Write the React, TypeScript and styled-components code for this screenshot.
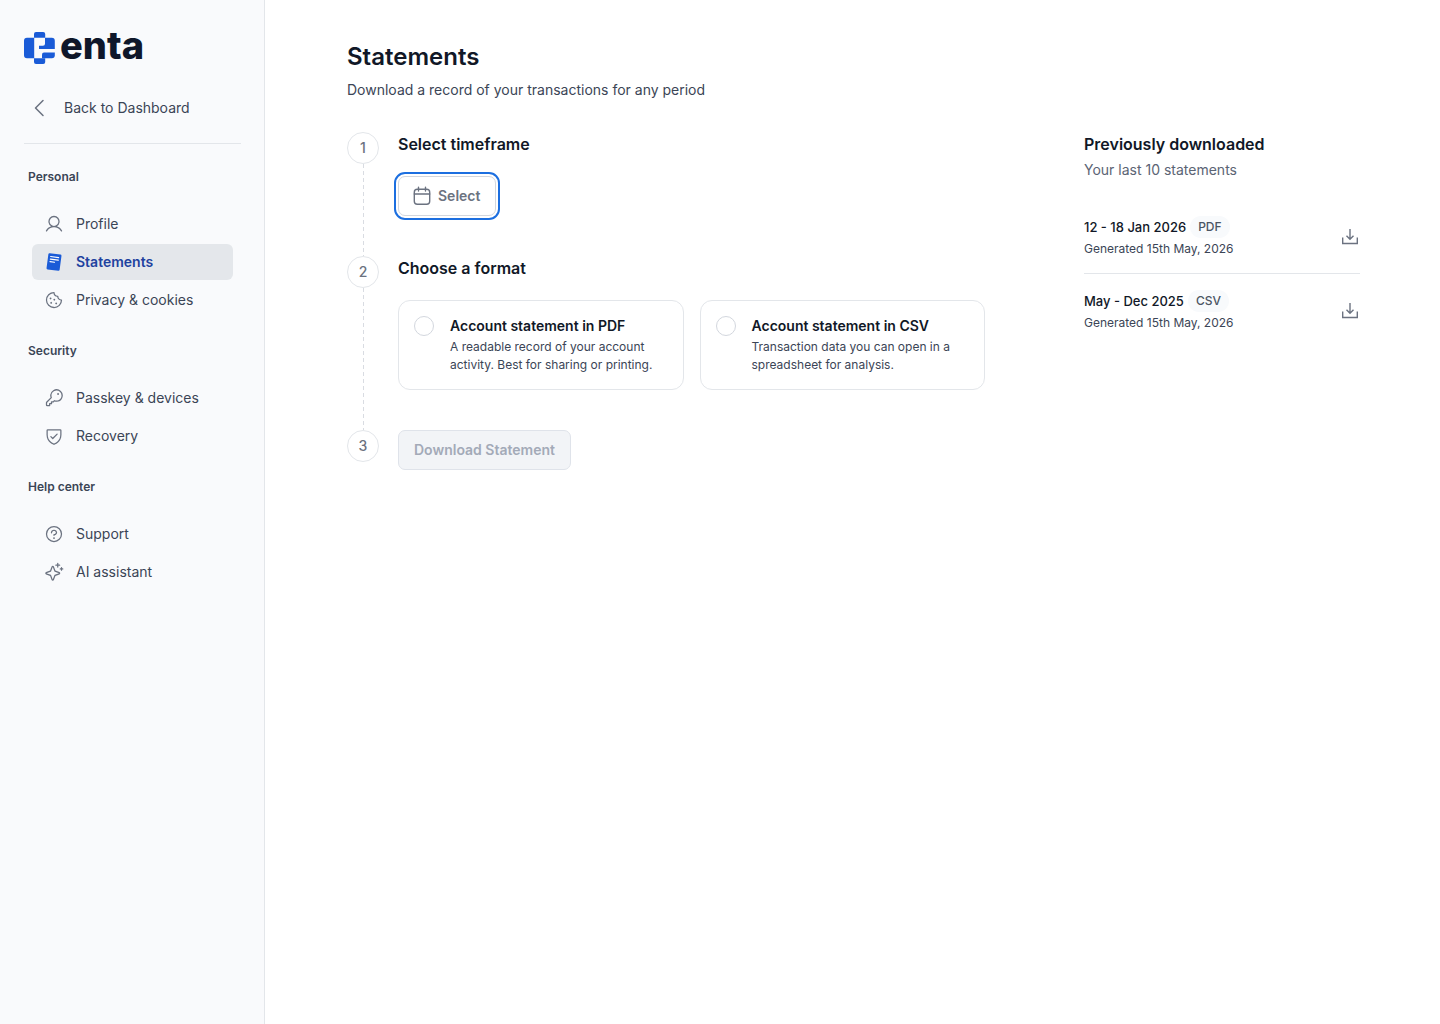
import React from "react";
import styled, { createGlobalStyle } from "styled-components";
import {
  PiCaretLeft,
  PiUser,
  PiCookie,
  PiKey,
  PiShieldCheck,
  PiQuestion,
  PiSparkle,
} from "react-icons/pi";

const color = {
  ink: "#111827",
  text: "#3b4556",
  muted: "#6b7280",
  faint: "#a3aab8",
  line: "#e3e6ea",
  lineStrong: "#d3d7de",
  panel: "#f9fafc",
  blue: "#1a5bd7",
  blueText: "#1e429f",
};

const GlobalStyle = createGlobalStyle`
  *, *::before, *::after { box-sizing: border-box; }
  body {
    margin: 0;
    background: #fff;
    color: ${color.text};
    font-family: Inter, "Liberation Sans", sans-serif;
    font-size: 14px;
    line-height: 20px;
  }
  h1, h2, h3, p, ul, ol { margin: 0; padding: 0; }
  ul, ol { list-style: none; }
  button, input { font: inherit; }
`;

const Page = styled.div`
  display: flex;
  min-height: 100vh;
`;

const Sidebar = styled.aside`
  flex: 0 0 265px;
  display: flex;
  flex-direction: column;
  padding: 32px 23px 32px 24px;
  background: ${color.panel};
  border-right: 1px solid ${color.line};
`;

const Brand = styled.a`
  display: flex;
  align-items: flex-start;
  gap: 4px;
  height: 32px;
  color: #0f172a;
  font-size: 38px;
  font-weight: 800;
  line-height: 26px;
  text-decoration: none;
`;

const BackLink = styled.a`
  display: flex;
  align-items: center;
  gap: 12px;
  margin: 32px 0 23px;
  padding-left: 4px;
  color: ${color.text};
  text-decoration: none;
  svg { color: ${color.muted}; }
`;

const NavSection = styled.section`
  display: flex;
  flex-direction: column;
  gap: 20px;
  & + & { margin-top: 24px; }
`;

const NavSections = styled.nav`
  padding-top: 24px;
  border-top: 1px solid ${color.line};
`;

const NavHeading = styled.h2`
  padding-left: 4px;
  font-size: 12px;
  font-weight: 600;
  line-height: 18px;
`;

const NavList = styled.ul`
  display: flex;
  flex-direction: column;
  gap: 2px;
  padding: 0 8px;
`;

const NavLink = styled.a<{ $active?: boolean }>`
  display: flex;
  align-items: center;
  gap: 12px;
  height: 36px;
  padding: 0 12px;
  border-radius: 6px;
  background: ${(p) => (p.$active ? "#e4e7eb" : "transparent")};
  color: ${(p) => (p.$active ? color.blueText : color.text)};
  font-weight: ${(p) => (p.$active ? 600 : 400)};
  text-decoration: none;
  svg { color: ${(p) => (p.$active ? color.blue : color.muted)}; }
`;

const Main = styled.main`
  flex: 1;
  min-width: 0;
  padding: 40px 80px 40px 82px;
`;

const PageTitle = styled.h1`
  color: ${color.ink};
  font-size: 24px;
  font-weight: 600;
  line-height: 34px;
`;

const Lead = styled.p`
  margin-top: 6px;
`;

const Columns = styled.div`
  display: grid;
  grid-template-columns: minmax(0, 1fr) 276px;
  gap: 99px;
  margin-top: 32px;
`;

const Step = styled.li`
  display: flex;
  gap: 19px;
`;

const StepRail = styled.div`
  display: flex;
  flex-direction: column;
  align-items: center;
  flex: 0 0 32px;
`;

const StepNumber = styled.span`
  display: grid;
  place-items: center;
  width: 32px;
  height: 32px;
  border: 1px solid ${color.line};
  border-radius: 50%;
  color: ${color.muted};
  font-weight: 500;
`;

const StepLine = styled.span`
  flex: 1;
  width: 1px;
  background: repeating-linear-gradient(
    to bottom,
    #d9dce2 0 4px,
    transparent 4px 7px
  );
`;

const StepBody = styled.div<{ $last?: boolean }>`
  flex: 1;
  min-width: 0;
  padding-bottom: ${(p) => (p.$last ? 0 : 40)}px;
`;

const Heading = styled.h2`
  color: ${color.ink};
  font-size: 16px;
  font-weight: 600;
  line-height: 24px;
`;

const StepContent = styled.div`
  margin-top: 20px;
`;

const Button = styled.button<{ $withIcon?: boolean }>`
  display: inline-flex;
  align-items: center;
  gap: 6px;
  height: 40px;
  padding: 0 15px 0 ${(p) => (p.$withIcon ? 13 : 15)}px;
  border: 1px solid ${color.lineStrong};
  border-radius: 7px;
  background: #fff;
  color: ${color.muted};
  font-weight: 600;
  vertical-align: top;
  &:focus { outline: 2px solid #1c6fe0; outline-offset: 2px; }
  &:disabled {
    border-color: #dfe3ea;
    background: #f2f4f7;
    color: ${color.faint};
  }
`;

const Formats = styled.div`
  display: grid;
  grid-template-columns: 1fr 1fr;
  gap: 16px;
`;

const FormatCard = styled.label`
  display: flex;
  gap: 16px;
  padding: 15px;
  border: 1px solid ${color.line};
  border-radius: 12px;
`;

const Radio = styled.input`
  appearance: none;
  flex: 0 0 20px;
  height: 20px;
  margin: 0;
  border: 1px solid ${color.lineStrong};
  border-radius: 50%;
  background: #fff;
  &:checked { border: 6px solid ${color.blue}; }
`;

const FormatText = styled.span`
  display: flex;
  flex-direction: column;
  gap: 2px;
  font-size: 12px;
  line-height: 18px;
`;

const FormatName = styled.span`
  color: ${color.ink};
  font-size: 14px;
  font-weight: 600;
  line-height: 20px;
`;

const HistoryLead = styled.p`
  margin-top: 4px;
  color: #5b6474;
`;

const HistoryList = styled.ul`
  margin-top: 20px;
`;

const HistoryItem = styled.li`
  display: flex;
  align-items: center;
  justify-content: space-between;
  padding: 16px 0 15px;
  & + & { border-top: 1px solid ${color.line}; }
`;

const HistoryTitle = styled.h3`
  display: flex;
  align-items: center;
  gap: 4px;
  color: ${color.ink};
  font-size: 13px;
  font-weight: 500;
  line-height: 22px;
`;

const Tag = styled.span`
  padding: 0 8px;
  border-radius: 11px;
  background: #f8fafc;
  color: #4b5563;
  font-size: 12px;
`;

const HistoryDate = styled.p`
  margin-top: 2px;
  font-size: 12px;
  line-height: 18px;
`;

const IconButton = styled.button`
  display: grid;
  padding: 0;
  border: 0;
  background: none;
  color: ${color.muted};
`;

const LogoMark = () => (
  <svg width="32" height="32" viewBox="0 0 32 32" aria-hidden="true">
    <g fill={color.blue}>
      <path d="M10 5.800V2a2 2 0 0 1 2-2h7.200a2 2 0 0 1 2 2v3.800z" />
      <path d="M10 26.200V30a2 2 0 0 0 2 2h7.200a2 2 0 0 0 2-2v-3.800z" />
      <path d="M3 5.800h7.200v20.400H3a3 3 0 0 1-3-3V8.800a3 3 0 0 1 3-3z" />
      <path d="M21 5.800h6.800a3 3 0 0 1 3 3V17H15v-3.200h4a2 2 0 0 0 2-2z" />
      <path d="M18 22.500a2 2 0 0 1 2-2h10.800v2.700a3 3 0 0 1-3 3H18z" />
    </g>
  </svg>
);

const StatementIcon = () => (
  <svg width="20" height="20" viewBox="0 0 20 20" aria-hidden="true">
    <g transform="rotate(7.500 10 10)">
      <rect x="3.400" y="1.800" width="13.200" height="16.400" rx="1.200" fill="currentColor" />
      <path
        d="M6 5h8M6 7.600h8M6 10.200h4.500"
        stroke="#fff"
        strokeWidth="1.200"
        strokeLinecap="round"
      />
    </g>
  </svg>
);

const CalendarIcon = () => (
  <svg
    width="20"
    height="20"
    viewBox="0 0 20 20"
    fill="none"
    stroke="currentColor"
    strokeWidth="1.400"
    strokeLinecap="round"
    aria-hidden="true"
  >
    <rect x="2.300" y="3.200" width="15.400" height="15" rx="3" />
    <path d="M2.300 8h15.400M6.500 1.300v3.700M13.500 1.300v3.700" />
  </svg>
);

const DownloadIcon = () => (
  <svg
    width="20"
    height="20"
    viewBox="0 0 20 20"
    fill="none"
    stroke="currentColor"
    strokeWidth="1.400"
    aria-hidden="true"
  >
    <path d="M2.700 10.500v6h14.600v-6M10 2v10M6.500 8.700l3.500 3.500 3.500-3.500" />
  </svg>
);

type NavItem = { label: string; icon: React.ReactNode; active?: boolean };

const sections: { title: string; items: NavItem[] }[] = [
  {
    title: "Personal",
    items: [
      { label: "Profile", icon: <PiUser size={20} /> },
      { label: "Statements", icon: <StatementIcon />, active: true },
      { label: "Privacy & cookies", icon: <PiCookie size={20} /> },
    ],
  },
  {
    title: "Security",
    items: [
      { label: "Passkey & devices", icon: <PiKey size={20} /> },
      { label: "Recovery", icon: <PiShieldCheck size={20} /> },
    ],
  },
  {
    title: "Help center",
    items: [
      { label: "Support", icon: <PiQuestion size={20} /> },
      { label: "AI assistant", icon: <PiSparkle size={20} /> },
    ],
  },
];

const formats = [
  {
    id: "pdf",
    name: "Account statement in PDF",
    text: "A readable record of your account activity. Best for sharing or printing.",
  },
  {
    id: "csv",
    name: "Account statement in CSV",
    text: "Transaction data you can open in a spreadsheet for analysis.",
  },
];

const history = [
  { range: "12 - 18 Jan 2026", type: "PDF", date: "Generated 15th May, 2026" },
  { range: "May - Dec 2025", type: "CSV", date: "Generated 15th May, 2026" },
];

export default function App() {
  return (
    <Page>
      <GlobalStyle />
      <Sidebar>
        <Brand href="#">
          <LogoMark />
          enta
        </Brand>
        <BackLink href="#">
          <PiCaretLeft size={24} />
          Back to Dashboard
        </BackLink>
        <NavSections>
          {sections.map((section) => (
            <NavSection key={section.title}>
              <NavHeading>{section.title}</NavHeading>
              <NavList>
                {section.items.map((item) => (
                  <li key={item.label}>
                    <NavLink href="#" $active={item.active}>
                      {item.icon}
                      {item.label}
                    </NavLink>
                  </li>
                ))}
              </NavList>
            </NavSection>
          ))}
        </NavSections>
      </Sidebar>
      <Main>
        <PageTitle>Statements</PageTitle>
        <Lead>Download a record of your transactions for any period</Lead>
        <Columns>
          <ol>
            <Step>
              <StepRail>
                <StepNumber>1</StepNumber>
                <StepLine />
              </StepRail>
              <StepBody>
                <Heading>Select timeframe</Heading>
                <StepContent>
                  <Button type="button" $withIcon autoFocus>
                    <CalendarIcon />
                    Select
                  </Button>
                </StepContent>
              </StepBody>
            </Step>
            <Step>
              <StepRail>
                <StepNumber>2</StepNumber>
                <StepLine />
              </StepRail>
              <StepBody>
                <Heading>Choose a format</Heading>
                <StepContent>
                  <Formats>
                    {formats.map((format) => (
                      <FormatCard key={format.id} htmlFor={format.id}>
                        <Radio type="radio" name="format" id={format.id} />
                        <FormatText>
                          <FormatName>{format.name}</FormatName>
                          {format.text}
                        </FormatText>
                      </FormatCard>
                    ))}
                  </Formats>
                </StepContent>
              </StepBody>
            </Step>
            <Step>
              <StepRail>
                <StepNumber>3</StepNumber>
              </StepRail>
              <StepBody $last>
                <Button type="button" disabled>
                  Download Statement
                </Button>
              </StepBody>
            </Step>
          </ol>
          <section>
            <Heading>Previously downloaded</Heading>
            <HistoryLead>Your last 10 statements</HistoryLead>
            <HistoryList>
              {history.map((entry) => (
                <HistoryItem key={entry.range}>
                  <div>
                    <HistoryTitle>
                      {entry.range}
                      <Tag>{entry.type}</Tag>
                    </HistoryTitle>
                    <HistoryDate>{entry.date}</HistoryDate>
                  </div>
                  <IconButton type="button" aria-label={`Download ${entry.range}`}>
                    <DownloadIcon />
                  </IconButton>
                </HistoryItem>
              ))}
            </HistoryList>
          </section>
        </Columns>
      </Main>
    </Page>
  );
}
